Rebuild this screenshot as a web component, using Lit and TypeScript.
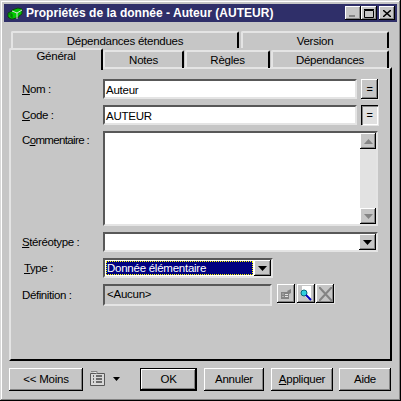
import { LitElement, html, css, svg } from "lit";
import { customElement } from "lit/decorators.js";

const arrow = html`<svg class="arr" width="9" height="5" viewBox="0 0 9 5"><path d="M0 0h9L4.500 5z" fill="#000"/></svg>`;

@customElement("app-root")
export class AppRoot extends LitElement {
  static styles = css`
    :host { display: block; width: 401px; height: 401px; font: 11.500px "Liberation Sans", Arial, sans-serif; letter-spacing: -0.25px; color: #000; }
    * { box-sizing: border-box; }
    .win { width: 401px; height: 401px; background: #c6c6c6; padding: 4px 4px 4px 4px; display: flex; flex-direction: column;
      box-shadow: inset -1px -1px 0 #000, inset 1px 1px 0 #d8d8d8, inset -2px -2px 0 #848484, inset 2px 2px 0 #fff; }
    .title { height: 18px; background: #2f2f69; display: flex; align-items: center; padding: 0 2px; flex: none; }
    .title .logo { margin: 0 3px 0 1px; flex: none; }
    .title .t { color: #fff; font-weight: bold; font-size: 12px; letter-spacing: 0.03px; white-space: nowrap; flex: 1; }
    .wb { width: 16px; height: 14px; background: #c6c6c6; display: flex; align-items: center; justify-content: center; flex: none;
      box-shadow: inset -1px -1px 0 #000, inset 1px 1px 0 #fff, inset -2px -2px 0 #848484; }
    .wb.min { align-items: flex-end; padding: 0 3px 3px 0; }
    .wb.last { margin-left: 2px; }
    .body { flex: 1; padding: 9px 6px 6px 5px; display: flex; flex-direction: column; }
    .tabs { display: flex; flex-direction: column; flex: none; }
    .trow { display: flex; }
    .trow.back { padding-left: 2px; gap: 2px; height: 17px; }
    .tab { height: 100%; display: flex; align-items: center; justify-content: center; border-top: 2px solid #e4e4e4; border-left: 2px solid #e4e4e4;
      border-right: 2px solid #000; border-top-left-radius: 2px; border-top-right-radius: 2px; padding-top: 1px; }
    .trow.front { height: 20px; position: relative; z-index: 1; }
    .t1 { width: 228px; } .t2 { width: 148px; }
    .t3 { width: 94px; height: 22px; background: #c6c6c6; border-right: 2px solid #000; padding-bottom: 8px; padding-top: 0; }
    .t4, .t5, .t6 { margin-top: 2px; height: 18px; padding-top: 0; padding-bottom: 1px; }
    .t4 { width: 81px; }
    .t5 { width: 85px; margin-left: 1px; }
    .t6 { width: 118px; margin-left: 1px; }
    .panel { width: 383px; height: 294px; margin-top: -1px; border-left: 2px solid #e4e4e4; border-top: 2px solid #e4e4e4; border-right: 2px solid #000; border-bottom: 2px solid #000;
      padding: 10px 11px 0 11px; display: grid; grid-template-columns: 81px 1fr; row-gap: 6px; align-content: start; }
    .lab { display: flex; align-items: center; white-space: nowrap; letter-spacing: -0.4px; }
    u { text-decoration-thickness: 1px; text-underline-offset: 1px; }
    .lab.top { align-items: flex-start; padding-top: 3px; letter-spacing: -0.65px; }
    .lab.ind { padding-left: 2px; }
    .sunk { background: #fff; border-top: 2px solid #585858; border-left: 2px solid #585858; border-right: 2px solid #e4e4e4; border-bottom: 2px solid #e4e4e4; }
    .inp { height: 20px; display: flex; align-items: center; padding: 1px 0 0 1px; }
    .with { display: flex; gap: 4px; width: 275px; }
    .with .inp { width: 254px; }
    .eq { width: 17px; height: 20px; background: #c6c6c6; display: flex; align-items: center; justify-content: center; font-size: 11px;
      box-shadow: inset -1px -1px 0 #000, inset 1px 1px 0 #fff, inset -2px -2px 0 #848484, 1px 1px 0 #e4e4e4; }
    .eq.foc { background: #e0e0e0; box-shadow: inset 1px 1px 0 #000, inset 2px 2px 0 #848484, inset -1px -1px 0 #fff, 1px 1px 0 #e4e4e4; }
    .area { width: 275px; height: 95px; display: flex; justify-content: flex-end; }
    .sb { width: 16px; height: 100%; display: flex; flex-direction: column; justify-content: space-between; background: #e2e2e2; }
    .sbb { width: 16px; height: 16px; background: #c6c6c6; display: flex; align-items: center; justify-content: center;
      box-shadow: inset -1px -1px 0 #000, inset 1px 1px 0 #fff, inset -2px -2px 0 #848484; }
    .combo { height: 20px; width: 275px; display: flex; justify-content: flex-end; align-items: stretch; }
    .combo.sm { width: 170px; }
    .ddb { width: 17px; background: #c6c6c6; display: flex; align-items: center; justify-content: center;
      box-shadow: inset -1px -1px 0 #000, inset 1px 1px 0 #fff, inset -2px -2px 0 #848484; }
    .sel { flex: 1; background: #000080; color: #fff; margin: 1px; padding-left: 1px; display: flex; align-items: center; outline: 1px dotted #ff0; outline-offset: -1px; }
    .def { display: flex; gap: 1px; width: 231px; height: 22px; }
    .ro { width: 170px; margin-right: 4px; background: #c6c6c6; display: flex; align-items: flex-start; padding: 2px 0 0 2px; }
    .ib { width: 18px; height: 19px; background: #c6c6c6; display: flex; align-items: center; justify-content: center; flex: none;
      box-shadow: inset -1px -1px 0 #000, inset 1px 1px 0 #fff, inset -2px -2px 0 #848484, 1px 1px 0 #e4e4e4; }
    .ib.first { margin-right: 1px; }
    .foot { flex: 1; display: flex; align-items: flex-start; padding-top: 7px; }
    .btn { height: 23px; background: #c6c6c6; display: flex; align-items: center; justify-content: center; flex: none; padding-bottom: 2px;
      box-shadow: inset -1px -1px 0 #000, inset 1px 1px 0 #fff, inset -2px -2px 0 #848484; }
    .btn.def2 { border: 1px solid #000; }
    .moins { width: 74px; } .ok { width: 57px; margin-left: 18px; } .ann { width: 60px; margin-left: 7px; }
    .app { width: 62px; margin-left: 7px; } .aide { width: 52px; margin-left: 6px; }
    .lst { margin: 3px 8px 0 7px; flex: none; }
    .la { margin: 9px 0 0 0; flex: none; width: 9px; }
  `;

  render() {
    const tri = (up: boolean) => svg`<svg width="9" height="5" viewBox="0 0 9 5"><path d="${up ? "M0 5L4.500 0L9 5z" : "M0 0h9L4.500 5z"}" fill="#848484"/></svg>`;
    return html`<div class="win">
      <div class="title">
        <svg class="logo" width="16" height="13" viewBox="0 0 16 13">
          <path d="M1 6l4-2 0-1 6-2 4 1v5l-3 2v1l-6 2-2 0-3-2z" fill="#00c800" stroke="#104010" stroke-width="1"/>
          <path d="M5 4l5 2v6M10 6l5-3" fill="none" stroke="#dcdcdc"/>
          <path d="M2 7h3v4M3 9h2" stroke="#0a600a" fill="none"/>
        </svg>
        <span class="t">Propriétés de la donnée - Auteur (AUTEUR)</span>
        <div class="wb min"><svg width="6" height="2"><rect width="6" height="2" fill="#848484"/></svg></div>
        <div class="wb"><svg width="10" height="9"><path d="M.5 1.500h9v7h-9z" fill="none" stroke="#000"/><path d="M0 .5h10" stroke="#000"/></svg></div>
        <div class="wb last"><svg width="8" height="7" viewBox="0 0 8 7"><path d="M0 0l8 7M8 0L0 7" stroke="#000" stroke-width="1.500"/></svg></div>
      </div>
      <div class="body">
        <div class="tabs">
          <div class="trow back"><div class="tab t1">Dépendances étendues</div><div class="tab t2">Version</div></div>
          <div class="trow front">
            <div class="tab t3">Général</div><div class="tab t4">Notes</div><div class="tab t5">Règles</div><div class="tab t6">Dépendances</div>
          </div>
        </div>
        <div class="panel">
          <div class="lab"><span><u>N</u>om :</span></div>
          <div class="with"><div class="sunk inp">Auteur</div><div class="eq">=</div></div>
          <div class="lab"><span><u>C</u>ode :</span></div>
          <div class="with"><div class="sunk inp">AUTEUR</div><div class="eq foc">=</div></div>
          <div class="lab top"><span>C<u>o</u>mmentaire :</span></div>
          <div class="sunk area"><div class="sb"><div class="sbb">${tri(true)}</div><div class="sbb">${tri(false)}</div></div></div>
          <div class="lab"><span><u>S</u>téréotype :</span></div>
          <div class="sunk combo"><div class="ddb">${arrow}</div></div>
          <div class="lab ind"><span><u>T</u>ype :</span></div>
          <div class="sunk combo sm"><div class="sel">Donnée élémentaire</div><div class="ddb">${arrow}</div></div>
          <div class="lab">Définition :</div>
          <div class="def">
            <div class="sunk ro">&lt;Aucun&gt;</div>
            <div class="ib first"><svg width="12" height="12" viewBox="0 0 12 12"><path d="M1 4h8v7H1z" fill="#848484"/><path d="M2.500 6h1M2.500 8.500h1M5 6.500h3M5 8.500h3" stroke="#e4e4e4"/><path d="M7 3l4-2v4l-2 1z" fill="#848484"/></svg></div>
            <div class="ib"><svg width="14" height="15" viewBox="0 0 14 15"><path d="M3 0h9v13H9L3 7z" fill="#fff"/><circle cx="5" cy="7" r="3" fill="#30d0e0" stroke="#086878"/><path d="M7 9l5 5" stroke="#0000c0" stroke-width="2"/></svg></div>
            <div class="ib"><svg width="13" height="14" viewBox="0 0 13 14"><path d="M0 0l13 14M13 0L0 14" stroke="#848484" stroke-width="2.200"/></svg></div>
          </div>
        </div>
        <div class="foot">
          <div class="btn moins">&lt;&lt; Moins</div>
          <svg class="lst" width="15" height="16" viewBox="0 0 15 16">
            <path d="M.5 2.500h14v12H.5z" fill="#d8d8d8" stroke="#585858"/><path d="M1 .5h6v2" fill="#eee" stroke="#848484"/>
            <path d="M3 5h1M6 5h6M3 8h1M6 8h6M3 11h1M6 11h6" stroke="#000"/>
          </svg>
          <svg class="la" width="9" height="5" viewBox="0 0 9 5"><path d="M0 0h7L3.500 4z" fill="#000"/></svg>
          <div class="btn def2 ok">OK</div>
          <div class="btn ann">Annuler</div>
          <div class="btn app"><span><u>A</u>ppliquer</span></div>
          <div class="btn aide">Aide</div>
        </div>
      </div>
    </div>`;
  }
}
